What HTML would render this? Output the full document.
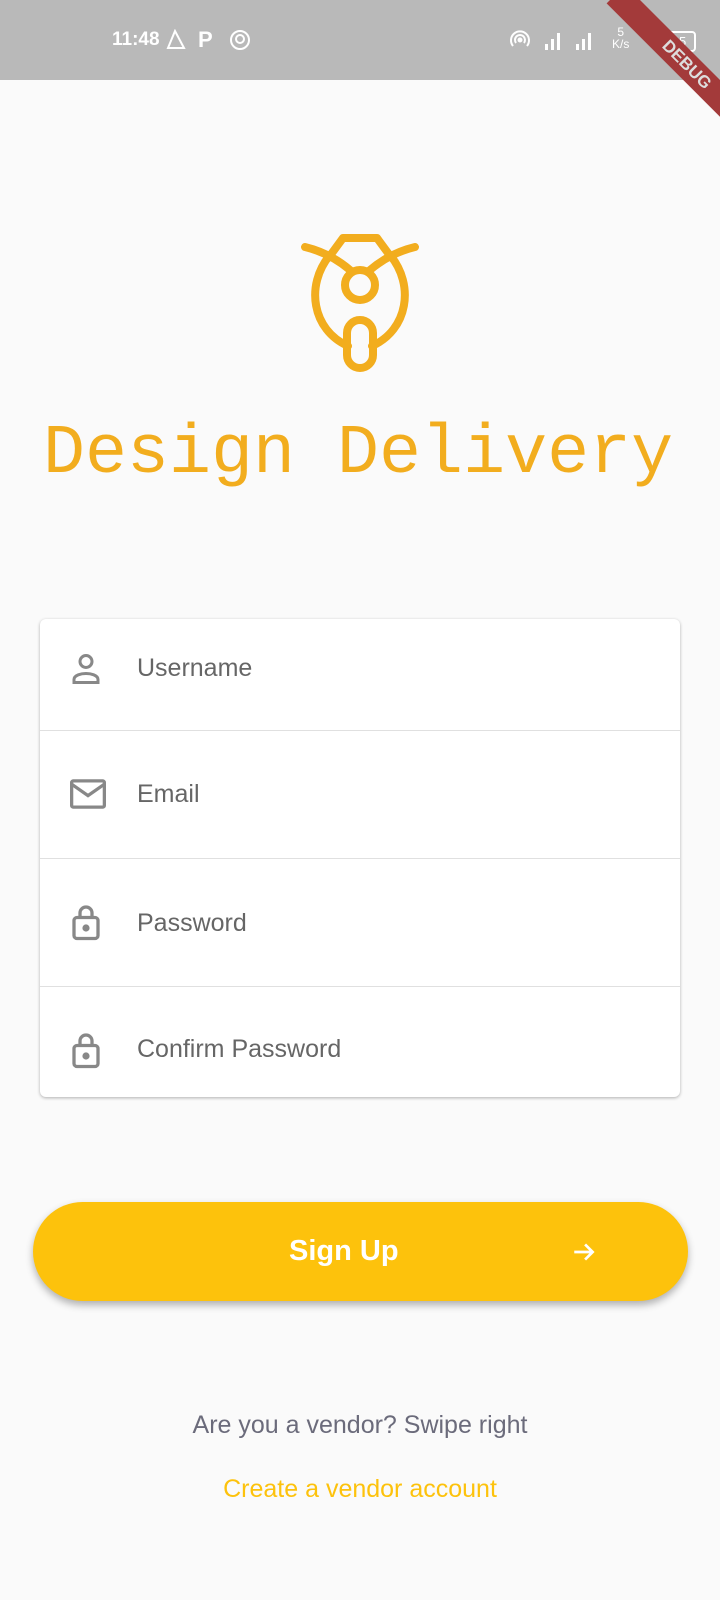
<!DOCTYPE html>
<html><head><meta charset="utf-8"><style>
body{margin:0;width:720px;height:1600px;background:#fafafa;font-family:"Liberation Sans",sans-serif;position:relative;overflow:hidden}
.sb{position:absolute;left:0;top:0;width:720px;height:80px;background:#b9b9b9;color:#fff;font-size:19px}
.card{position:absolute;left:40px;top:619px;width:640px;height:478px;background:#fff;border-radius:6px;box-shadow:0 1px 3px rgba(0,0,0,.3)}
.row{position:absolute;left:0;width:640px;height:127px;border-bottom:1px solid #e0e0e0}
.row span{position:absolute;left:97px;font-size:25px;color:#666;line-height:30px}
.row svg{position:absolute;left:28px}
.btn{position:absolute;left:33px;top:1202px;width:655px;height:99px;border-radius:50px;background:#fdc20c;box-shadow:0 4px 8px rgba(0,0,0,.3);color:#fff;font-weight:bold;font-size:29px;line-height:99px}
</style></head><body>
<div class="sb">
<span style="position:absolute;left:112px;top:29px;font-weight:bold">11:48</span>
<svg style="position:absolute;left:165px;top:29px" width="22" height="22" viewBox="0 0 22 22" fill="none" stroke="#fff" stroke-width="2"><path d="M10 2L3 19h16z"/></svg>
<span style="position:absolute;top:27px;font-weight:bold;left:198px;font-size:22px">P</span>
<svg style="position:absolute;left:228px;top:28px" width="24" height="24" viewBox="0 0 24 24" fill="none" stroke="#fff" stroke-width="2"><circle cx="12" cy="12" r="9"/><circle cx="12" cy="11" r="4"/></svg>
<svg style="position:absolute;left:508px;top:28px" width="24" height="24" viewBox="0 0 24 24" fill="none" stroke="#fff" stroke-width="2"><path d="M5 18a9 9 0 1 1 14 0M8 15a5 5 0 1 1 8 0"/><circle cx="12" cy="12" r="1.5" fill="#fff"/></svg>
<svg style="position:absolute;left:540px;top:25px" width="60" height="26" viewBox="0 0 60 26" fill="#fff"><rect x="5" y="19" width="3" height="6"/><rect x="11" y="14" width="3" height="11"/><rect x="17" y="8" width="3" height="17"/><rect x="36" y="19" width="3" height="6"/><rect x="42" y="14" width="3" height="11"/><rect x="48" y="8" width="3" height="17"/></svg>
<span style="position:absolute;left:612px;top:26px;font-size:12px;line-height:12px;text-align:center">5<br>K/s</span>
<div style="position:absolute;left:662px;top:31px;width:30px;height:17px;border:2px solid #fff;border-radius:4px;font-size:13px;text-align:center;line-height:17px">65</div>
<div style="position:absolute;width:200px;height:26px;background:#a33a3a;transform:rotate(45deg);transform-origin:0 0;left:625px;top:-15px;color:#ddd;font-weight:bold;font-size:17px;text-align:center;line-height:26px">DEBUG</div>
</div>
<svg style="position:absolute;left:295px;top:232px" width="130" height="150" viewBox="295 232 130 150" fill="none" stroke="#f2ad1e" stroke-width="8" stroke-linecap="round" stroke-linejoin="round">
<path d="M305 247 Q330 253 350 270"/><path d="M415 247 Q390 253 370 270"/>
<path d="M332 253 L343 238 L377 238 L388 253"/>
<path d="M330 255 C305 285 312 330 348 346"/><path d="M390 255 C415 285 408 330 372 346"/>
<circle cx="360" cy="285" r="15"/>
<rect x="347" y="320" width="26" height="48" rx="13"/>
</svg>
<div style="position:absolute;left:43px;top:420px;font-family:'Liberation Mono',monospace;font-size:70px;color:#f2ad1e;line-height:70px">Design Delivery</div>
<div class="card">
<div class="row" style="top:0;height:111px"><svg style="top:32px" width="36" height="36" viewBox="0 0 24 24" fill="none" stroke="#888" stroke-width="2"><circle cx="12" cy="7" r="4"/><path d="M4 21v-2c0-3 5-4 8-4s8 1 8 4v2z"/></svg><span style="top:34px">Username</span></div>
<div class="row" style="top:112px"><svg style="top:45px" width="40" height="36" viewBox="0 0 24 22" fill="none" stroke="#888" stroke-width="2"><rect x="2" y="3" width="20" height="16" rx="1"/><path d="M2 5l10 7 10-7"/></svg><span style="top:48px">Email</span></div>
<div class="row" style="top:240px"><svg style="top:43px" width="36" height="40" viewBox="0 0 24 26" fill="none" stroke="#888" stroke-width="2.2"><rect x="4" y="10" width="16" height="14" rx="2"/><path d="M8 10V7a4 4 0 0 1 8 0v3"/><circle cx="12" cy="17" r="1.3" fill="#888"/></svg><span style="top:49px">Password</span></div>
<div class="row" style="top:368px;height:110px;border:0"><svg style="top:43px" width="36" height="40" viewBox="0 0 24 26" fill="none" stroke="#888" stroke-width="2.2"><rect x="4" y="10" width="16" height="14" rx="2"/><path d="M8 10V7a4 4 0 0 1 8 0v3"/><circle cx="12" cy="17" r="1.3" fill="#888"/></svg><span style="top:47px">Confirm Password</span></div>
</div>
<div class="btn"><span style="position:absolute;left:256px">Sign Up</span><svg style="position:absolute;left:538px;top:37px" width="26" height="26" viewBox="0 0 24 24" fill="none" stroke="#fff" stroke-width="2.5"><path d="M3 12h17M13 5l7 7-7 7"/></svg></div>
<div style="position:absolute;left:0;width:720px;top:1411px;text-align:center;font-size:25px;color:#6b6b7b">Are you a vendor? Swipe right</div>
<div style="position:absolute;left:0;width:720px;top:1475px;text-align:center;font-size:25px;color:#fdc20c">Create a vendor account</div>
</body></html>
